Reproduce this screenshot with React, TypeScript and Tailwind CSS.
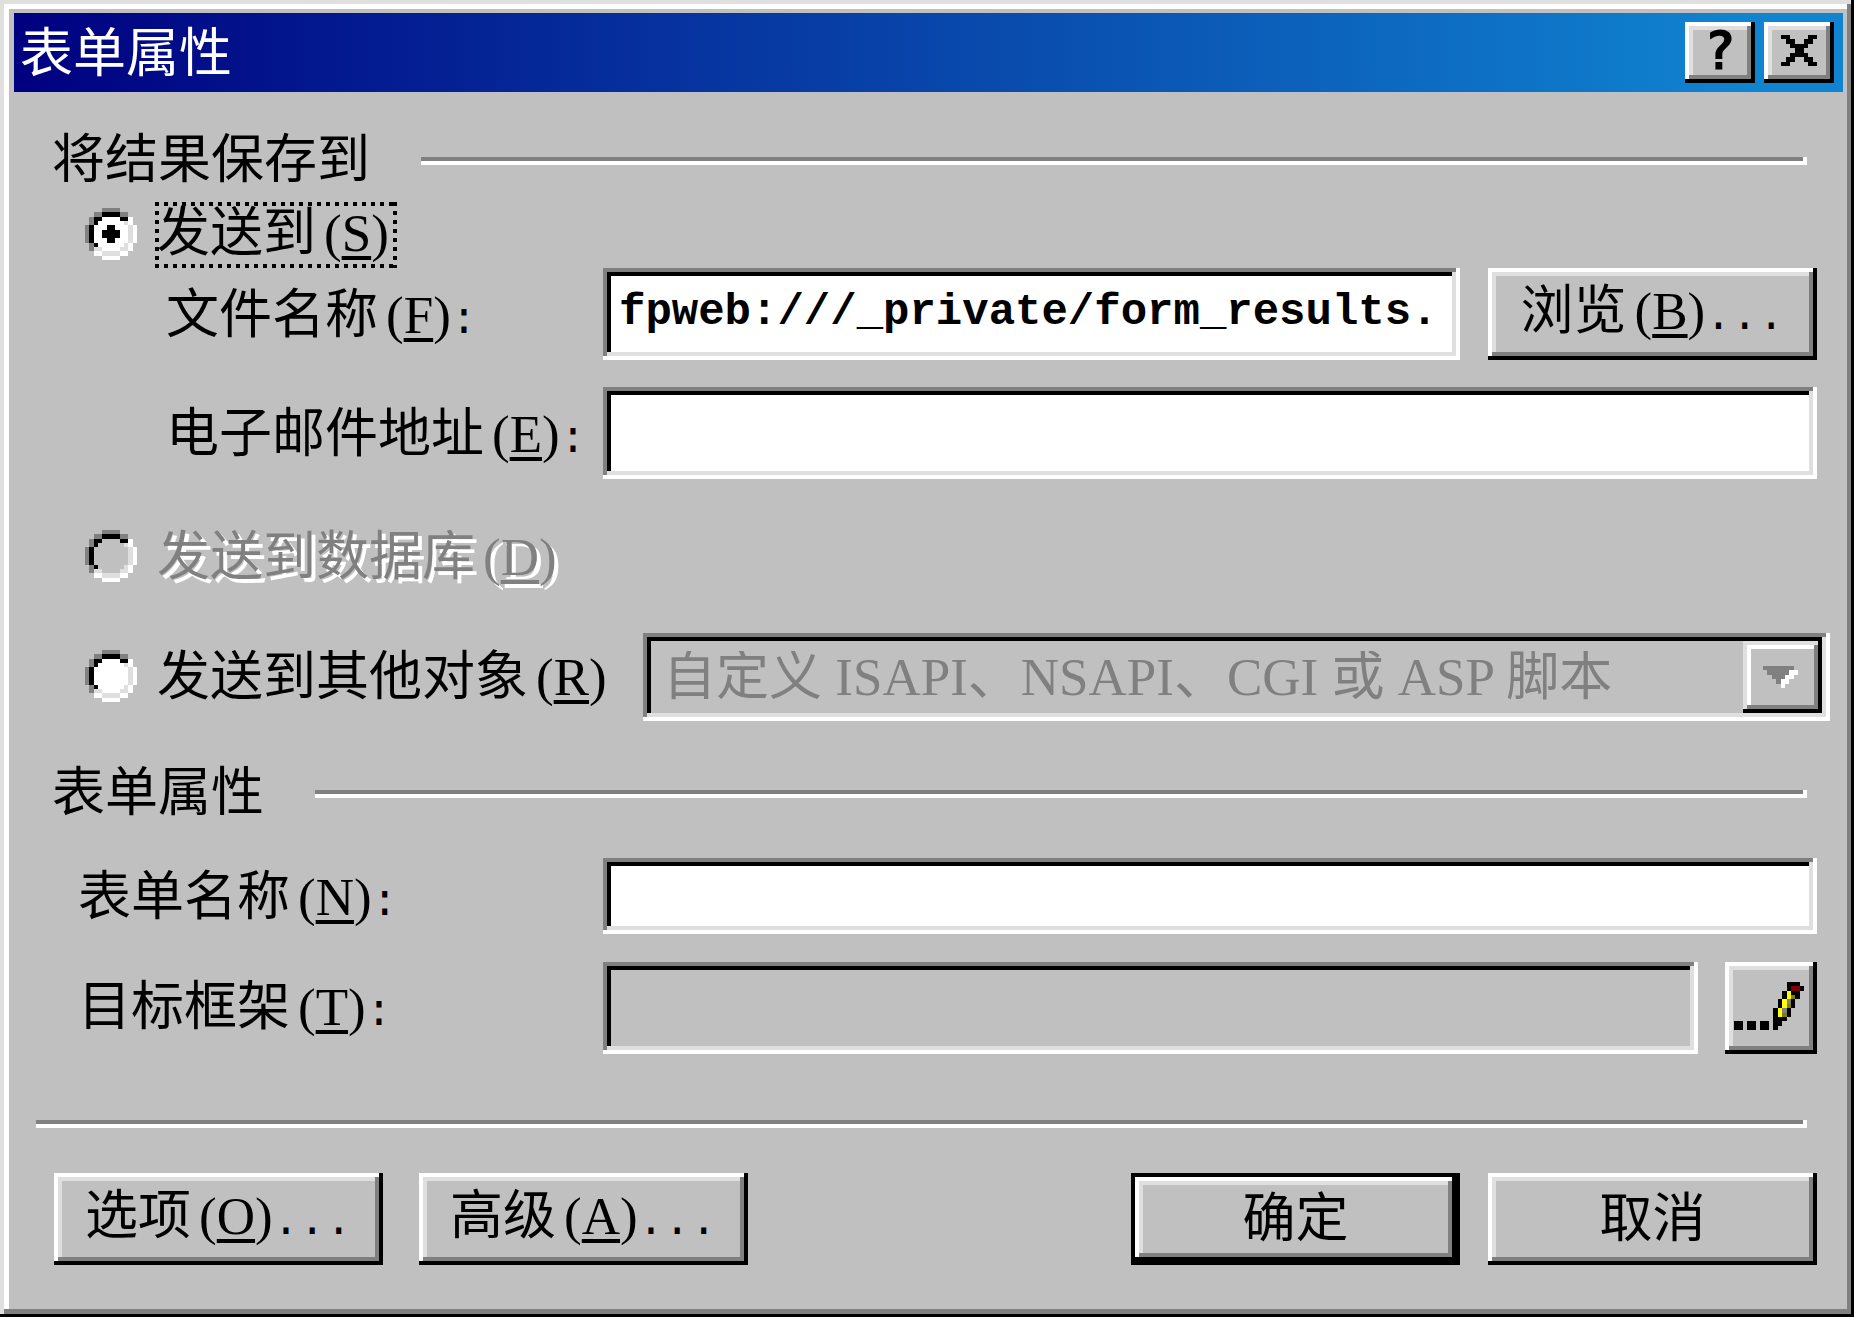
import type { ReactNode } from 'react';
import clsx from 'clsx';

const RAISED =
	'bg-[#c0c0c0] shadow-[inset_-4px_-4px_#000,inset_4px_4px_#fff,inset_-8px_-8px_#808080,inset_8px_8px_#dfdfdf]';
const RAISED_DEFAULT =
	'bg-[#c0c0c0] shadow-[inset_0_0_0_4px_#000,inset_-8px_-8px_#000,inset_8px_8px_#fff,inset_-12px_-12px_#808080,inset_12px_12px_#dfdfdf]';
const SUNKEN =
	'shadow-[inset_-4px_-4px_#fff,inset_4px_4px_#808080,inset_-8px_-8px_#dfdfdf,inset_8px_8px_#000]';

const PALETTE: Record<string, string> = {
	B: '#000000',
	G: '#808080',
	W: '#ffffff',
	L: '#dfdfdf',
	F: '#c0c0c0',
	Y: '#ffff00',
	O: '#808000',
	R: '#800000',
};

const RADIO = [
	'....GGGG....',
	'..GGBBBBGG..',
	'.GBBWWWWBBW.',
	'.GBWWWWWWLW.',
	'GBWWWWWWWWLW',
	'GBWWWWWWWWLW',
	'GBWWWWWWWWLW',
	'GBWWWWWWWWLW',
	'.GBWWWWWWLW.',
	'.GLLWWWWLLW.',
	'..WWLLLLWW..',
	'....WWWW....',
];

const RADIO_CHECKED = [
	...RADIO.slice(0, 4),
	'GBWWWBBWWWLW',
	'GBWWBBBBWWLW',
	'GBWWBBBBWWLW',
	'GBWWWBBWWWLW',
	...RADIO.slice(8),
];

const RADIO_DISABLED = [
	'....GGGG....',
	'..GGBBBBGG..',
	'.GBBFFFFBBW.',
	'.GBFFFFFFLW.',
	'GBFFFFFFFFLW',
	'GBFFFFFFFFLW',
	'GBFFFFFFFFLW',
	'GBFFFFFFFFLW',
	'.GBFFFFFFLW.',
	'.GLLFFFFLLW.',
	'..WWLLLLWW..',
	'....WWWW....',
];

const CLOSE = ['BB....BB', '.BB..BB.', '..BBBB..', '...BB...', '..BBBB..', '.BB..BB.', 'BB....BB'];

const ARROW = ['GGGGGGG.', '.GGGGGWW', '..GGGWW.', '...GWW..', '....W...'];

const PENCIL = [
	'............BBB.',
	'............BRRB',
	'...........BYBB.',
	'...........BYOB.',
	'..........BYGB..',
	'..........BYOB..',
	'.........BYGB...',
	'.........BYOB...',
	'.........BBB....',
	'BB.BB.BB.BB.....',
	'BB.BB.BB.B......',
];

function PixelIcon({ rows, className }: { rows: string[]; className: string }) {
	return (
		<svg
			aria-hidden="true"
			viewBox={`0 0 ${rows[0].length} ${rows.length}`}
			preserveAspectRatio="none"
			shapeRendering="crispEdges"
			className={clsx('pointer-events-none shrink-0', className)}
		>
			{rows.map((row, y) =>
				[...row].map((c, x) =>
					c === '.' ? null : <rect key={`${x}-${y}`} x={x} y={y} width={1} height={1} fill={PALETTE[c]} />,
				),
			)}
		</svg>
	);
}

/* Caption with its access key in brackets, e.g. 浏览(B)... */
function Caption({ text, accessKey, tail }: { text: string; accessKey: string; tail?: string }) {
	return (
		<span className="whitespace-nowrap">
			{text}
			<span className="pl-2">(</span>
			<span className="underline decoration-4 underline-offset-[5px]">{accessKey}</span>
			<span>)</span>
			{tail && <span className="font-['Liberation_Mono',monospace] text-[44px]">{tail}</span>}
		</span>
	);
}

function Rule() {
	return <div className="h-2 flex-1 bg-[#808080] shadow-[inset_-4px_-4px_#fff]" />;
}

function GroupTitle({ children }: { children: ReactNode }) {
	return (
		<div className="flex items-center gap-[51px] pt-1 pr-[10px] pl-4">
			<h2>{children}</h2>
			<Rule />
		</div>
	);
}

type RadioProps = {
	id: string;
	rows: string[];
	checked?: boolean;
	disabled?: boolean;
	focused?: boolean;
	children: ReactNode;
};

function Radio({ id, rows, checked, disabled, focused, children }: RadioProps) {
	return (
		<div className="flex items-center gap-[18px] pl-[49px]">
			<span className="grid shrink-0 pb-0.5">
				<input
					id={id}
					type="radio"
					name="target"
					defaultChecked={checked}
					disabled={disabled}
					className="size-[52px] appearance-none [grid-area:1/1]"
				/>
				<PixelIcon rows={rows} className="size-[52px] [grid-area:1/1]" />
			</span>
			<label
				htmlFor={id}
				className={clsx(
					'flex h-[66px] items-center pl-0.5',
					disabled && 'text-[#808080] [text-shadow:4px_4px_0_#fff]',
					focused &&
						'pr-2 pb-1 [background:repeating-linear-gradient(90deg,#000_0_4px,transparent_4px_9px)_top/100%_4px_no-repeat,repeating-linear-gradient(90deg,#000_0_4px,transparent_4px_9px)_bottom/100%_4px_no-repeat,repeating-linear-gradient(#000_0_4px,transparent_4px_9px)_left/4px_100%_no-repeat,repeating-linear-gradient(#000_0_4px,transparent_4px_9px)_right/4px_100%_no-repeat]',
				)}
			>
				{children}
			</label>
		</div>
	);
}

const BUTTON = 'flex h-[92px] w-[329px] shrink-0 items-center justify-center';
const FIELD = "min-w-0 flex-1 px-4 font-['Liberation_Mono',monospace] text-[44px] font-bold outline-none";

export default function App() {
	return (
		<main className="min-h-screen w-full bg-[#c0c0c0] pt-[13px] pr-[11px] pb-[48px] pl-[14px] font-['Liberation_Serif','Noto_Sans_CJK_SC',serif] text-[53px] leading-[53px] text-black shadow-[inset_-3px_-3px_#000,inset_4px_4px_#dfdfdf,inset_-7px_-8px_#808080,inset_9px_9px_#fff]">
			{/* Title bar */}
			<header className="flex h-[79px] items-center justify-between bg-linear-to-r/srgb from-[#000080] to-[#1084d0] to-95% pr-[9px] pl-1.5 text-white">
				<h1 className="pt-1">表单属性</h1>
				<div className="flex gap-[9px] text-black">
					<button
						type="button"
						aria-label="帮助"
						className={clsx(
							"flex h-[61px] w-[70px] items-center justify-center pb-1 font-['DejaVu_Sans_Mono',monospace] text-[53px] font-bold",
							RAISED,
						)}
					>
						?
					</button>
					<button
						type="button"
						aria-label="关闭"
						className={clsx('flex h-[61px] w-[70px] items-center justify-center pb-1', RAISED)}
					>
						<PixelIcon rows={CLOSE} className="h-[31px] w-9" />
					</button>
				</div>
			</header>

			<form className="flex flex-col pt-[38px] pr-[26px] pl-[22px]">
				{/* Where results are saved */}
				<GroupTitle>将结果保存到</GroupTitle>
				<div className="mt-[15px]">
					<Radio id="send-to" rows={RADIO_CHECKED} checked focused>
						<Caption text="发送到" accessKey="S" />
					</Radio>
				</div>
				<div className="flex items-center">
					<label htmlFor="file-name" className="w-[567px] shrink-0 pt-2 pl-[130px]">
						<Caption text="文件名称" accessKey="F" tail=":" />
					</label>
					<input
						id="file-name"
						type="text"
						defaultValue="fpweb:///_private/form_results."
						className={clsx('h-[92px] bg-white pb-1', FIELD, SUNKEN)}
					/>
					<button type="button" className={clsx('ml-7', BUTTON, RAISED)}>
						<Caption text="浏览" accessKey="B" tail="..." />
					</button>
				</div>
				<div className="mt-[27px] flex items-center">
					<label htmlFor="email" className="w-[567px] shrink-0 pt-2 pl-[130px]">
						<Caption text="电子邮件地址" accessKey="E" tail=":" />
					</label>
					<input id="email" type="text" className={clsx('h-[92px] bg-white', FIELD, SUNKEN)} />
				</div>
				<div className="mt-[45px]">
					<Radio id="send-db" rows={RADIO_DISABLED} disabled>
						<Caption text="发送到数据库" accessKey="D" />
					</Radio>
				</div>
				<div className="mt-[43px] -mr-[13px] flex items-center">
					<div className="w-[607px] shrink-0">
						<Radio id="send-other" rows={RADIO}>
							<Caption text="发送到其他对象" accessKey="R" />
						</Radio>
					</div>
					<div className={clsx('grid h-[88px] min-w-0 flex-1 items-center p-2', SUNKEN)}>
						<select
							disabled
							aria-label="其他对象"
							className="h-[72px] w-full appearance-none pl-3 text-[#808080] opacity-100 [grid-area:1/1]"
						>
							<option>自定义 ISAPI、NSAPI、CGI 或 ASP 脚本</option>
						</select>
						<span className="pointer-events-none flex h-[72px] w-[79px] items-center justify-center justify-self-end bg-[#c0c0c0] pr-1 shadow-[inset_-4px_-4px_#000,inset_4px_4px_#dfdfdf,inset_-8px_-8px_#808080,inset_8px_8px_#fff] [grid-area:1/1]">
							<PixelIcon rows={ARROW} className="h-[22px] w-[35px]" />
						</span>
					</div>
				</div>

				{/* Form properties */}
				<div className="mt-[42px]">
					<GroupTitle>表单属性</GroupTitle>
				</div>
				<div className="mt-[38px] flex items-center">
					<label htmlFor="form-name" className="w-[567px] shrink-0 pt-2 pl-[42px]">
						<Caption text="表单名称" accessKey="N" tail=":" />
					</label>
					<input id="form-name" type="text" className={clsx('h-[76px] bg-white', FIELD, SUNKEN)} />
				</div>
				<div className="mt-7 flex items-center">
					<label htmlFor="target-frame" className="w-[567px] shrink-0 pt-1 pl-[42px]">
						<Caption text="目标框架" accessKey="T" tail=":" />
					</label>
					<input
						id="target-frame"
						type="text"
						readOnly
						className={clsx('h-[92px] bg-[#c0c0c0]', FIELD, SUNKEN)}
					/>
					<button
						type="button"
						aria-label="更改目标框架"
						className={clsx('ml-[27px] flex h-[92px] w-[92px] shrink-0 items-center justify-center pr-1 pb-1', RAISED)}
					>
						<PixelIcon rows={PENCIL} className="h-12 w-[70px]" />
					</button>
				</div>

				<div className="mt-[66px] flex pr-[10px]">
					<Rule />
				</div>
				<div className="mt-[45px] flex justify-between pl-[18px]">
					<div className="flex gap-9">
						<button type="button" className={clsx(BUTTON, RAISED)}>
							<Caption text="选项" accessKey="O" tail="..." />
						</button>
						<button type="button" className={clsx(BUTTON, RAISED)}>
							<Caption text="高级" accessKey="A" tail="..." />
						</button>
					</div>
					<div className="flex gap-7">
						<button type="button" className={clsx(BUTTON, RAISED_DEFAULT)}>
							确定
						</button>
						<button type="button" className={clsx(BUTTON, RAISED)}>
							取消
						</button>
					</div>
				</div>
			</form>
		</main>
	);
}
